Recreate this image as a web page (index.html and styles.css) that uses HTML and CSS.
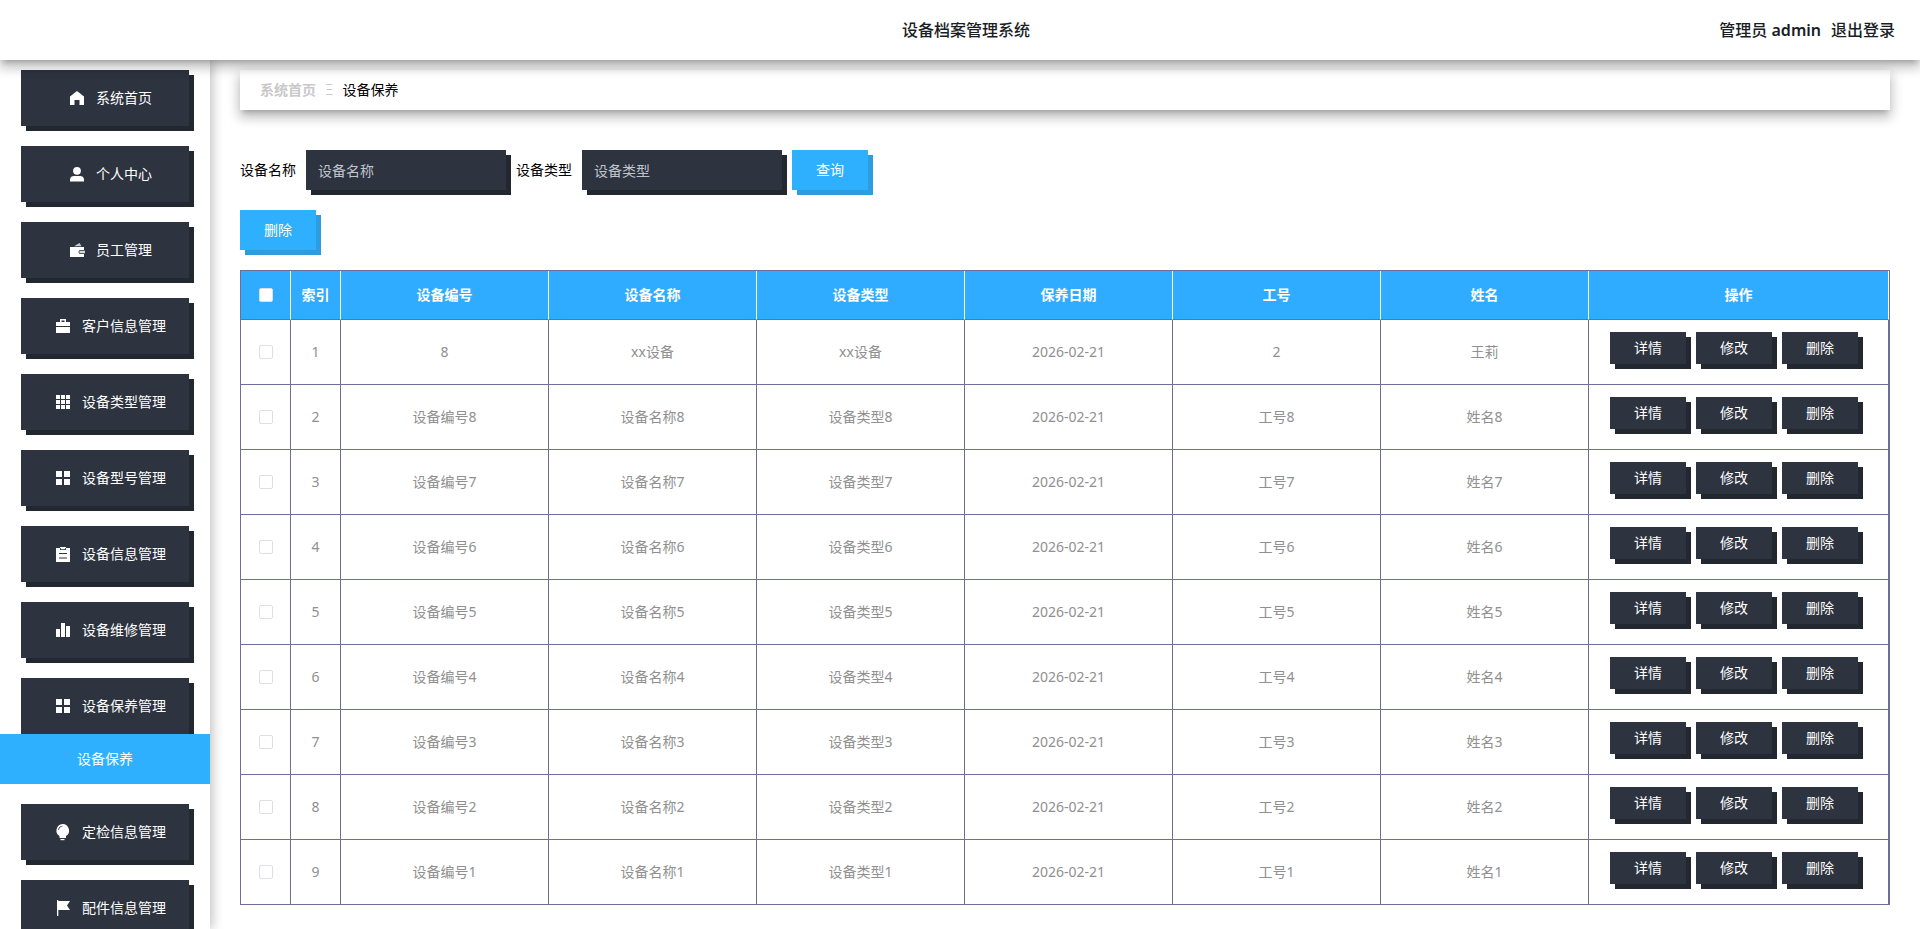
FILE: index.html
```html
<!DOCTYPE html>
<html lang="zh-CN">
<head>
<meta charset="utf-8">
<title>设备档案管理系统</title>
<link rel="stylesheet" href="styles.css">
</head>
<body>
<header class="topbar">
  <h1 class="topbar-title">设备档案管理系统</h1>
  <div class="topbar-user"><span>管理员 <strong>admin</strong></span><a href="#">退出登录</a></div>
</header>
<div class="layout">
  <nav class="sidebar">
    <a class="menu-item" href="#"><svg class="icon" viewBox="0 0 14 14"><path d="M7 0 0 5.500V14h4.500V9h5v5H14V5.500z"/></svg>系统首页</a>
    <a class="menu-item" href="#"><svg class="icon" viewBox="0 0 14 14"><circle cx="7" cy="3.800" r="3.900"/><path d="M0 14.500v-2C0 10 2 8.900 4 8.900h6c2 0 4 1.100 4 3.600v2z"/></svg>个人中心</a>
    <a class="menu-item" href="#"><svg class="icon" viewBox="0 0 14 14"><path d="M4 3.200 9.500 0l2 3.200z" opacity=".75"/><path d="M0 4h14v3H10.500a2 2 0 0 0 0 4H14v3H0z"/><path d="M10.500 7.800H15v2.400h-4.500a1.200 1.200 0 0 1 0-2.400z" opacity=".8"/></svg>员工管理</a>
    <a class="menu-item" href="#"><svg class="icon" viewBox="0 0 14 14"><path fill-rule="evenodd" d="M4 3V0h6v3h4v4H0V3zM5.500 1.500V3h3V1.500zM0 8h14v6H0z"/></svg>客户信息管理</a>
    <a class="menu-item" href="#"><svg class="icon" viewBox="0 0 14 14"><path d="M0 0h4v4H0zM5 0h4v4H5zM10 0h4v4h-4zM0 5h4v4H0zM5 5h4v4H5zM10 5h4v4h-4zM0 10h4v4H0zM5 10h4v4H5zM10 10h4v4h-4z"/></svg>设备类型管理</a>
    <a class="menu-item" href="#"><svg class="icon" viewBox="0 0 14 14"><path d="M0 0h6v6H0zM8 0h6v6H8zM0 8h6v6H0zM8 8h6v6H8z"/></svg>设备型号管理</a>
    <a class="menu-item" href="#"><svg class="icon" viewBox="0 0 14 14"><path fill-rule="evenodd" d="M0 1h4V0h6v1h4v14H0zM4 1v2h6V1h-.8v1.200H4.800V1zM3 6v1h8V6zM3 10.500v1h8v-1z"/></svg>设备信息管理</a>
    <a class="menu-item" href="#"><svg class="icon" viewBox="0 0 14 14"><path d="M0 6h4v8H0zM5 0h4v14H5zM10 3h4v11h-4z"/></svg>设备维修管理</a>
    <div class="menu-group">
      <a class="menu-item" href="#"><svg class="icon" viewBox="0 0 14 14"><path d="M0 0h6v6H0zM8 0h6v6H8zM0 8h6v6H0zM8 8h6v6H8z"/></svg>设备保养管理</a>
      <a class="submenu-item" href="#">设备保养</a>
    </div>
    <a class="menu-item" href="#"><svg class="icon" viewBox="0 0 14 14"><path fill-rule="evenodd" d="M6.500-1A6.500 6.500 0 0 1 10 11v2H3.500v-2A6.500 6.500 0 0 1 6.500-1zM2.200 5h.8a4 4 0 0 1 3.500-3.500V.7A4.800 4.800 0 0 0 2.200 5z"/><path d="M4.500 14h4v1.200h-4z"/></svg>定检信息管理</a>
    <a class="menu-item" href="#"><svg class="icon" viewBox="0 0 14 14"><path d="M1-1h1.300v1H14l-3 4.500L14 9H2.300v6H1z"/></svg>配件信息管理</a>
  </nav>
  <main class="content">
    <nav class="breadcrumb"><a href="#">系统首页</a><span class="separator">Ξ</span><span>设备保养</span></nav>
    <form class="search">
      <label for="name">设备名称</label>
      <input class="field" id="name" type="text" placeholder="设备名称">
      <label for="type">设备类型</label>
      <input class="field" id="type" type="text" placeholder="设备类型">
      <button class="btn btn-primary" type="button">查询</button>
    </form>
    <div class="toolbar"><button class="btn btn-primary" type="button">删除</button></div>
    <table class="grid">
      <colgroup><col class="col-narrow"><col class="col-narrow"><col><col><col><col><col><col><col class="col-actions"></colgroup>
      <thead><tr><th><input class="check" type="checkbox" aria-label="全选"></th><th>索引</th><th>设备编号</th><th>设备名称</th><th>设备类型</th><th>保养日期</th><th>工号</th><th>姓名</th><th>操作</th></tr></thead>
      <tbody>
        <tr><td><input class="check" type="checkbox" aria-label="选择 1"></td><td>1</td><td>8</td><td>xx设备</td><td>xx设备</td><td>2026-02-21</td><td>2</td><td>王莉</td><td><div class="actions"><button class="btn" type="button">详情</button><button class="btn" type="button">修改</button><button class="btn" type="button">删除</button></div></td></tr>
        <tr><td><input class="check" type="checkbox" aria-label="选择 2"></td><td>2</td><td>设备编号8</td><td>设备名称8</td><td>设备类型8</td><td>2026-02-21</td><td>工号8</td><td>姓名8</td><td><div class="actions"><button class="btn" type="button">详情</button><button class="btn" type="button">修改</button><button class="btn" type="button">删除</button></div></td></tr>
        <tr><td><input class="check" type="checkbox" aria-label="选择 3"></td><td>3</td><td>设备编号7</td><td>设备名称7</td><td>设备类型7</td><td>2026-02-21</td><td>工号7</td><td>姓名7</td><td><div class="actions"><button class="btn" type="button">详情</button><button class="btn" type="button">修改</button><button class="btn" type="button">删除</button></div></td></tr>
        <tr><td><input class="check" type="checkbox" aria-label="选择 4"></td><td>4</td><td>设备编号6</td><td>设备名称6</td><td>设备类型6</td><td>2026-02-21</td><td>工号6</td><td>姓名6</td><td><div class="actions"><button class="btn" type="button">详情</button><button class="btn" type="button">修改</button><button class="btn" type="button">删除</button></div></td></tr>
        <tr><td><input class="check" type="checkbox" aria-label="选择 5"></td><td>5</td><td>设备编号5</td><td>设备名称5</td><td>设备类型5</td><td>2026-02-21</td><td>工号5</td><td>姓名5</td><td><div class="actions"><button class="btn" type="button">详情</button><button class="btn" type="button">修改</button><button class="btn" type="button">删除</button></div></td></tr>
        <tr><td><input class="check" type="checkbox" aria-label="选择 6"></td><td>6</td><td>设备编号4</td><td>设备名称4</td><td>设备类型4</td><td>2026-02-21</td><td>工号4</td><td>姓名4</td><td><div class="actions"><button class="btn" type="button">详情</button><button class="btn" type="button">修改</button><button class="btn" type="button">删除</button></div></td></tr>
        <tr><td><input class="check" type="checkbox" aria-label="选择 7"></td><td>7</td><td>设备编号3</td><td>设备名称3</td><td>设备类型3</td><td>2026-02-21</td><td>工号3</td><td>姓名3</td><td><div class="actions"><button class="btn" type="button">详情</button><button class="btn" type="button">修改</button><button class="btn" type="button">删除</button></div></td></tr>
        <tr><td><input class="check" type="checkbox" aria-label="选择 8"></td><td>8</td><td>设备编号2</td><td>设备名称2</td><td>设备类型2</td><td>2026-02-21</td><td>工号2</td><td>姓名2</td><td><div class="actions"><button class="btn" type="button">详情</button><button class="btn" type="button">修改</button><button class="btn" type="button">删除</button></div></td></tr>
        <tr><td><input class="check" type="checkbox" aria-label="选择 9"></td><td>9</td><td>设备编号1</td><td>设备名称1</td><td>设备类型1</td><td>2026-02-21</td><td>工号1</td><td>姓名1</td><td><div class="actions"><button class="btn" type="button">详情</button><button class="btn" type="button">修改</button><button class="btn" type="button">删除</button></div></td></tr>
      </tbody>
    </table>
  </main>
</div>
</body>
</html>
```
FILE: styles.css
```css
* { box-sizing: border-box; }

:root {
  --blue: #2eb0ff;
  --blue-edge: #2e9ddf;
  --dark: #2d333f;
  --dark-edge: #23272f;
  --line: #6f6d99;
  --raised: 0 5px 5px -3px rgba(0, 0, 0, .2), 0 8px 10px 1px rgba(0, 0, 0, .14), 0 3px 14px 2px rgba(0, 0, 0, .12);
}

body {
  margin: 0;
  height: 100vh;
  overflow: hidden;
  display: flex;
  flex-direction: column;
  background: #fff;
  color: #000;
  font: 14px/20px "Noto Sans", "Noto Sans CJK SC", sans-serif;
}

a { color: inherit; text-decoration: none; }
input, button { font: inherit; }

.topbar {
  position: relative;
  z-index: 2;
  flex: none;
  display: grid;
  grid-template-columns: 1fr auto 1fr;
  align-items: center;
  height: 60px;
  padding: 0 25px 0 37px;
  background: #fff;
  box-shadow: var(--raised);
  color: #1a1d24;
  font-size: 16px;
  font-weight: 500;
}

.topbar-title { grid-column: 2; margin: 0; font-size: 16px; font-weight: 500; }
.topbar-user { display: flex; justify-content: flex-end; gap: 10px; }
.topbar-user strong { font-weight: 600; }

.layout { flex: 1; display: flex; min-height: 0; }

.sidebar {
  flex: none;
  width: 210px;
  padding: 10px 0;
  overflow: hidden;
  display: flex;
  flex-direction: column;
  gap: 20px;
  background: #fff;
  box-shadow: 1px 0 12px rgba(0, 0, 0, .3);
}

.menu-item {
  flex: none;
  display: flex;
  align-items: center;
  justify-content: center;
  gap: 12px;
  height: 56px;
  margin: 0 21px;
  padding-left: 12px;
  background: var(--dark);
  box-shadow: 5px 5px 0 var(--dark-edge);
  color: #fff;
}

.icon { width: 14px; height: 14px; fill: currentColor; overflow: visible; }

.submenu-item {
  position: relative;
  display: flex;
  align-items: center;
  justify-content: center;
  height: 50px;
  background: var(--blue);
  color: #fff;
}

.content { flex: 1; min-width: 0; padding: 10px 30px; }

.breadcrumb {
  display: flex;
  align-items: center;
  height: 40px;
  padding: 0 20px;
  background: #fff;
  box-shadow: var(--raised);
}

.breadcrumb a { color: #c8c8c8; font-weight: 700; }
.separator { margin: 0 9px; color: #c0c4cc; font-weight: 300; }

.search { display: flex; align-items: center; margin-top: 40px; }
.search label { margin-right: 10px; }
.field {
  width: 200px;
  height: 40px;
  margin-right: 10px;
  padding: 0 12px;
  border: 0;
  background: var(--dark);
  box-shadow: 5px 5px 0 var(--dark-edge);
  color: #fff;
}
.field::placeholder { color: #c0c4cc; opacity: 1; }

.btn {
  width: 76px;
  height: 32px;
  padding: 0;
  border: 0;
  background: var(--dark);
  box-shadow: 5px 5px 0 var(--dark-edge);
  color: #fff;
}
.btn-primary { height: 40px; background: var(--blue); box-shadow: 5px 5px 0 var(--blue-edge); }

.toolbar { display: flex; margin: 20px 0; }

.grid {
  width: 100%;
  table-layout: fixed;
  border: 1px solid var(--line);
  border-collapse: separate;
  border-spacing: 0;
  color: #909090;
  text-align: center;
}
.col-narrow { width: 50px; }
.col-actions { width: 300px; }

.grid th, .grid td { padding: 0; border: solid var(--line); border-width: 0 1px 1px 0; }
.grid th { height: 49px; border-right-color: #fff; background: #2fabff; color: #fff; font-weight: 700; }
.grid td { height: 65px; }
.grid tbody tr:last-child td { height: 64px; border-bottom: 0; }

.actions { display: flex; justify-content: center; gap: 10px; padding: 0 9px 8px 0; }

.check {
  appearance: none;
  display: block;
  width: 14px;
  height: 14px;
  margin: 0 auto;
  border: 1px solid #dcdfe6;
  border-radius: 2px;
  background: #fff;
}
```
